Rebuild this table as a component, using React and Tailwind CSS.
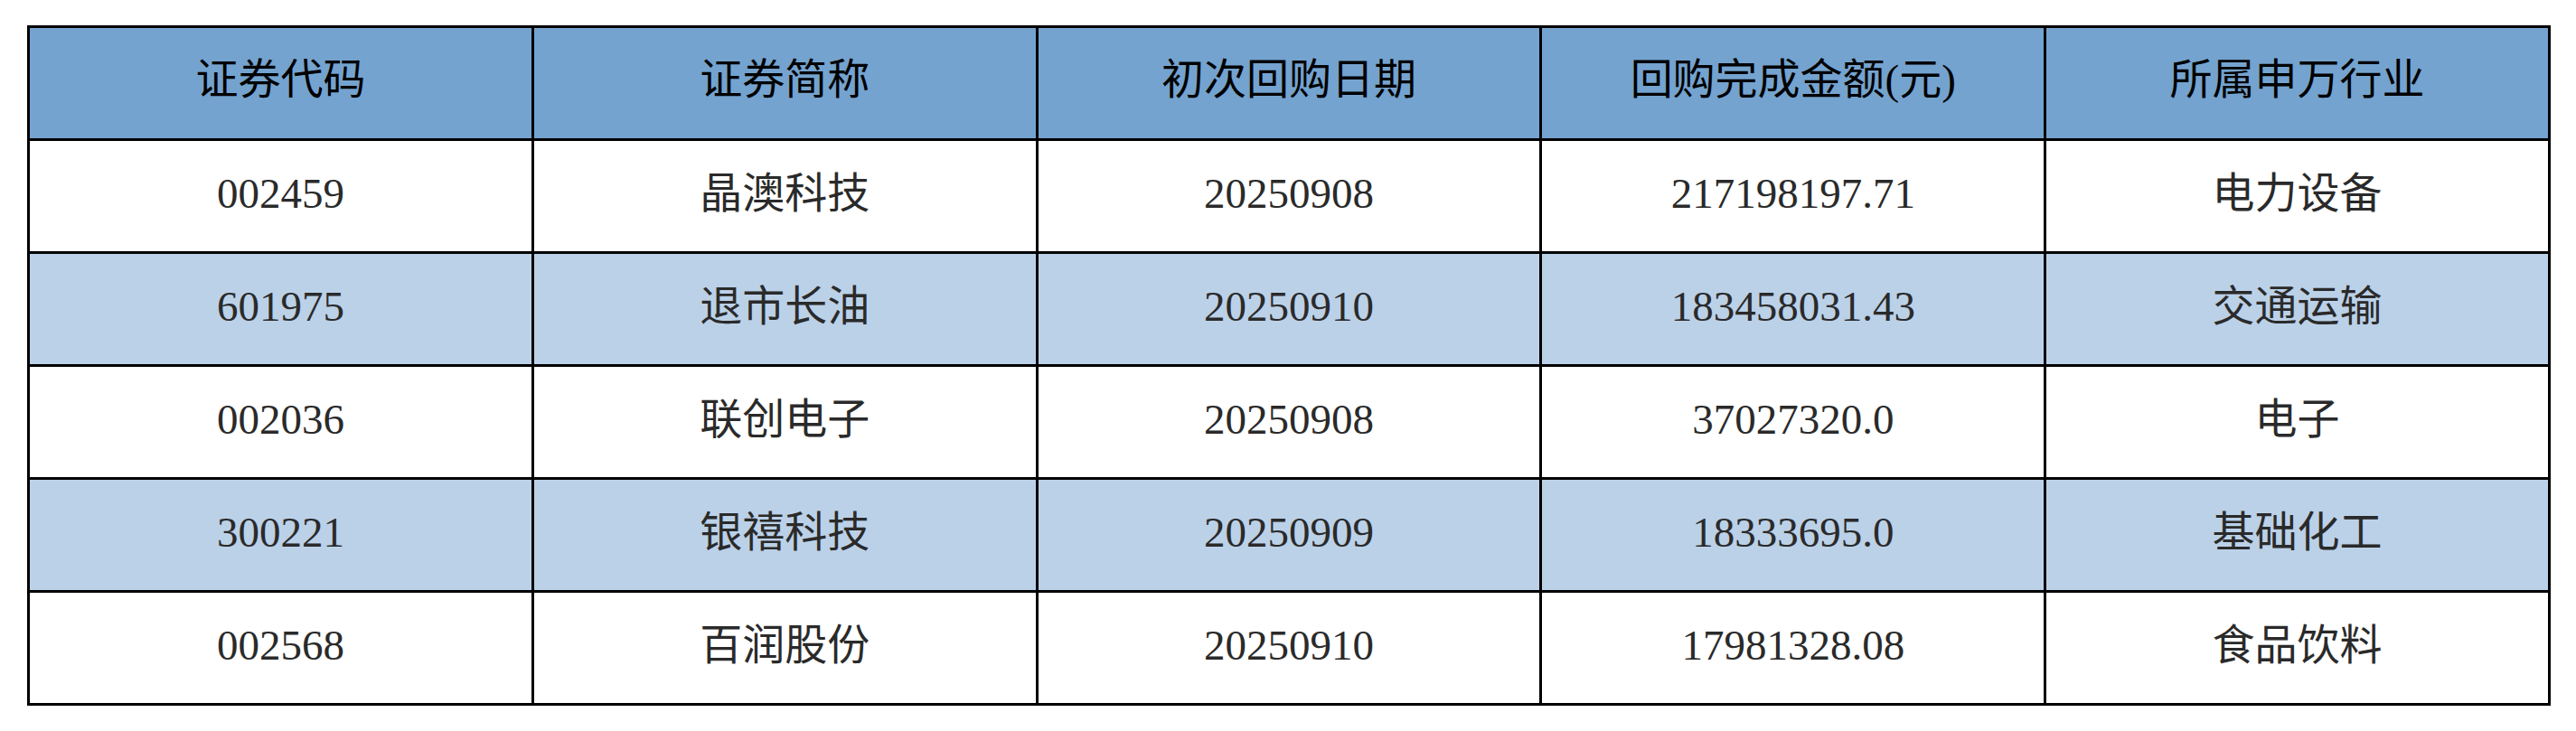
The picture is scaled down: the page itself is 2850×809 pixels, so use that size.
const rows = [
  ["002459", "晶澳科技", "20250908", "217198197.71", "电力设备"],
  ["601975", "退市长油", "20250910", "183458031.43", "交通运输"],
  ["002036", "联创电子", "20250908", "37027320.0", "电子"],
  ["300221", "银禧科技", "20250909", "18333695.0", "基础化工"],
  ["002568", "百润股份", "20250910", "17981328.08", "食品饮料"],
];

const heads = ["证券代码", "证券简称", "初次回购日期", "回购完成金额(元)", "所属申万行业"];

export default function App() {
  return (
    <div className="w-[2850px] h-[809px] bg-white pt-[28px] pl-[30px]">
      <table
        className="w-[2792px] table-fixed border-collapse border-[3px] border-black text-center"
        style={{ fontFamily: '"Liberation Serif", "Noto Sans CJK SC", serif' }}
      >
        <thead>
          <tr className="h-[125px] bg-[#74a3cf]">
            {heads.map((h) => (
              <th key={h} className="border-[3px] border-black pb-[7px] font-normal text-[47px] text-black">
                {h}
              </th>
            ))}
          </tr>
        </thead>
        <tbody>
          {rows.map((r, i) => (
            <tr key={r[0]} className={i % 2 === 1 ? "h-[125px] bg-[#bbd1e8]" : "h-[125px] bg-white"}>
              {r.map((c, j) => (
                <td key={j} className="border-[3px] border-black pb-[6px] text-[47px] text-[#2a2a2a]">
                  {c}
                </td>
              ))}
            </tr>
          ))}
        </tbody>
      </table>
    </div>
  );
}
